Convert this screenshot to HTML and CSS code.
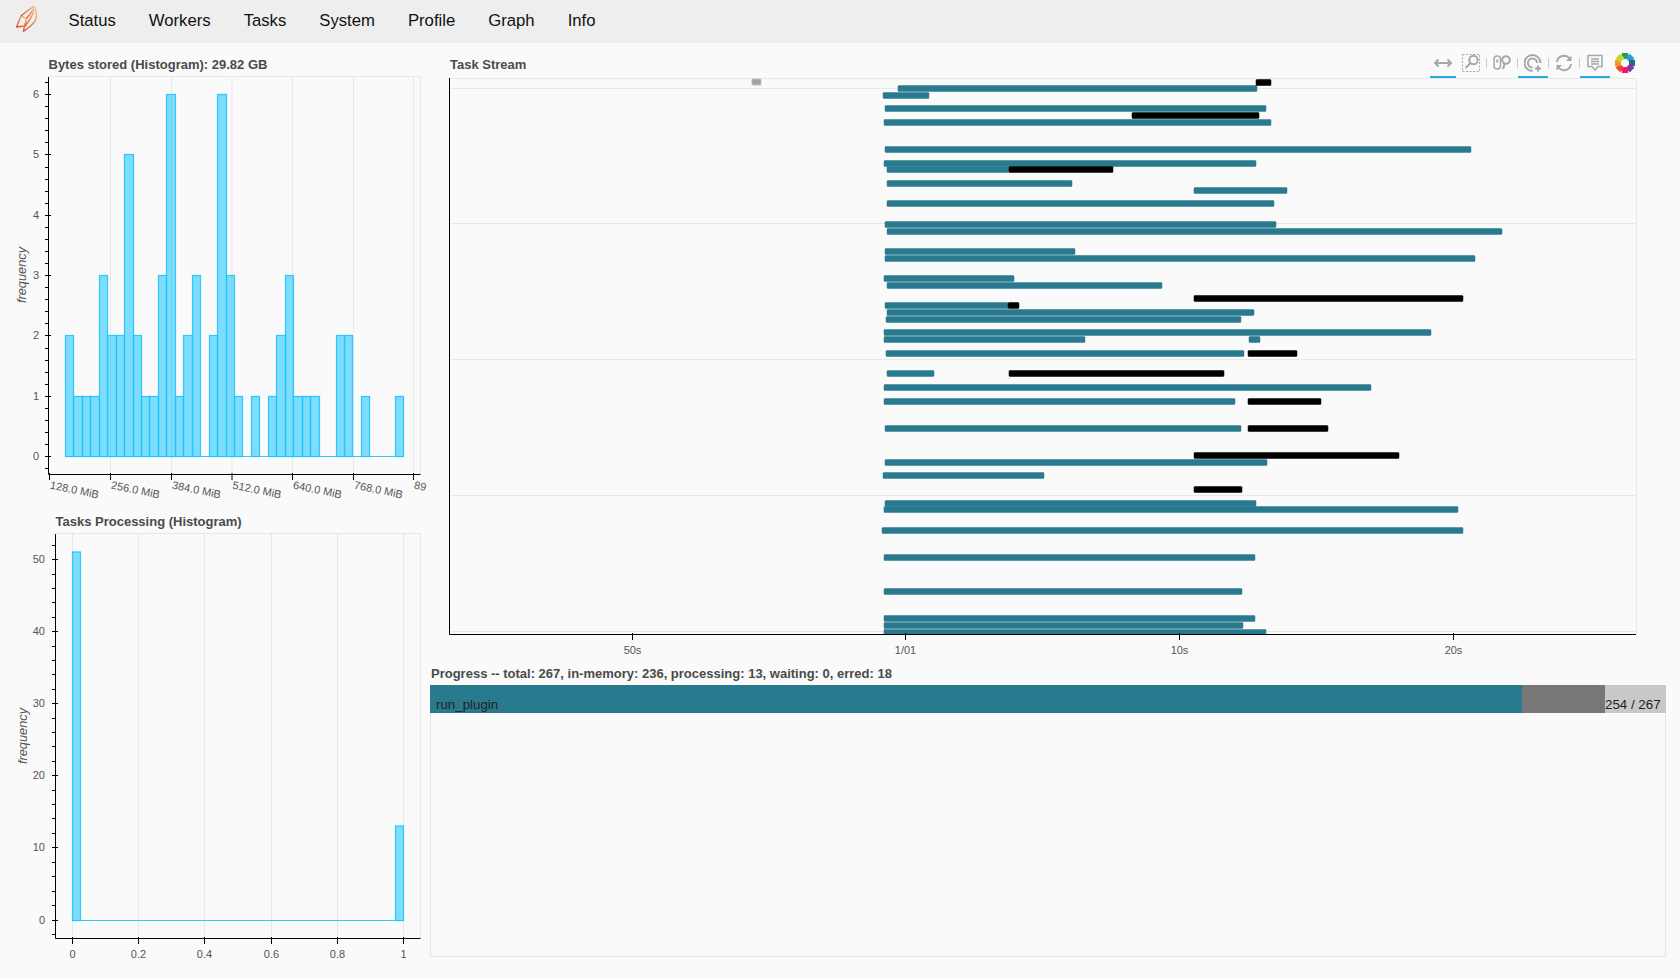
FILE: index.html
```html
<!DOCTYPE html>
<html>
<head>
    <title>Dask Status</title>
    <link rel="stylesheet" href="styles.css">
</head>
<body>
    <nav class="navbar">
        <svg class="navbar-logo" viewBox="0 0 24 28" width="24" height="28">
            <defs>
                <linearGradient id="leaf" x1="0" y1="1" x2="1" y2="0">
                    <stop offset="0" stop-color="#d9502e"/>
                    <stop offset="0.6" stop-color="#e98a5a"/>
                    <stop offset="1" stop-color="#f6c18e"/>
                </linearGradient>
            </defs>
            <g fill="none" stroke="url(#leaf)" stroke-width="1.3" stroke-linejoin="round">
                <path d="M2.500 23 L7 12 L12.500 14.500 L11 22 Z"/>
                <path d="M9.300 27.500 L12.500 14.500"/>
                <path d="M7 12 C11 8.500 15 6 20 2"/>
                <path d="M12.500 14.500 C15 11 18 8 20 4"/>
                <path d="M11 22 C14 18 18 14 20 6"/>
                <path d="M20 2 C23 8 23 14 20.500 18 C17 22.500 13 24.500 9.300 27.500"/>
            </g>
        </svg>
        <ul class="navbar-links">
            <li>Status</li>
            <li>Workers</li>
            <li>Tasks</li>
            <li>System</li>
            <li>Profile</li>
            <li>Graph</li>
            <li>Info</li>
        </ul>
    </nav>

    <main class="dashboard">
        <section class="left-col">
            <h2 class="plot-title title-bytes">Bytes stored (Histogram): 29.82 GB</h2>
            <!-- y range of the viewBox follows the page so the numbers read as screen rows -->
            <svg class="plot" viewBox="0 72 430 433" width="430" height="433">
                <path class="frame" d="M49 76.500 H420.500 V474"/>
                <path class="grid" d="M110.500 77 V474 M171.500 77 V474 M232 77 V474 M292.500 77 V474 M353.500 77 V474 M413.500 77 V474"/>
                <g class="bars">
                    <path d="M65.500 456.500 H403.500"/>
                    <rect x="65.500" y="335.500" width="8" height="121"/>
                    <rect x="73.500" y="396.500" width="9" height="60"/>
                    <rect x="82.500" y="396.500" width="8" height="60"/>
                    <rect x="90.500" y="396.500" width="9" height="60"/>
                    <rect x="99.500" y="275.500" width="8" height="181"/>
                    <rect x="107.500" y="335.500" width="9" height="121"/>
                    <rect x="116.500" y="335.500" width="8" height="121"/>
                    <rect x="124.500" y="154.500" width="9" height="302"/>
                    <rect x="133.500" y="335.500" width="8" height="121"/>
                    <rect x="141.500" y="396.500" width="8" height="60"/>
                    <rect x="149.500" y="396.500" width="9" height="60"/>
                    <rect x="158.500" y="275.500" width="8" height="181"/>
                    <rect x="166.500" y="94.500" width="9" height="362"/>
                    <rect x="175.500" y="396.500" width="8" height="60"/>
                    <rect x="183.500" y="335.500" width="9" height="121"/>
                    <rect x="192.500" y="275.500" width="8" height="181"/>
                    <rect x="209.500" y="335.500" width="8" height="121"/>
                    <rect x="217.500" y="94.500" width="9" height="362"/>
                    <rect x="226.500" y="275.500" width="8" height="181"/>
                    <rect x="234.500" y="396.500" width="8" height="60"/>
                    <rect x="251.500" y="396.500" width="8" height="60"/>
                    <rect x="268.500" y="396.500" width="8" height="60"/>
                    <rect x="276.500" y="335.500" width="9" height="121"/>
                    <rect x="285.500" y="275.500" width="8" height="181"/>
                    <rect x="293.500" y="396.500" width="9" height="60"/>
                    <rect x="302.500" y="396.500" width="8" height="60"/>
                    <rect x="310.500" y="396.500" width="9" height="60"/>
                    <rect x="336.500" y="335.500" width="8" height="121"/>
                    <rect x="344.500" y="335.500" width="8" height="121"/>
                    <rect x="361.500" y="396.500" width="8" height="60"/>
                    <rect x="395.500" y="396.500" width="8" height="60"/>
                </g>
                <path class="axis" d="M48.500 77 V474.500 H420.500"/>
                <path class="axis" d="M45 94.500 H51 M45 154.500 H51 M45 215.500 H51 M45 275.500 H51 M45 335.500 H51 M45 396.500 H51 M45 456.500 H51"/>
                <path class="axis" d="M45 82.500 H48 M45 106.500 H48 M45 118.500 H48 M45 130.500 H48 M45 142.500 H48 M45 167.500 H48 M45 179.500 H48 M45 191.500 H48 M45 203.500 H48 M45 227.500 H48 M45 239.500 H48 M45 251.500 H48 M45 263.500 H48 M45 287.500 H48 M45 299.500 H48 M45 311.500 H48 M45 323.500 H48 M45 348.500 H48 M45 360.500 H48 M45 372.500 H48 M45 384.500 H48 M45 408.500 H48 M45 420.500 H48 M45 432.500 H48 M45 444.500 H48 M45 468.500 H48"/>
                <path class="axis" d="M49.500 473 V480 M110.500 473 V480 M171.500 473 V480 M232 473 V480 M292.500 473 V480 M353.500 473 V480 M413.500 473 V480"/>
                <g class="tick-label end">
                    <text x="39" y="98">6</text>
                    <text x="39" y="158">5</text>
                    <text x="39" y="219">4</text>
                    <text x="39" y="279">3</text>
                    <text x="39" y="339">2</text>
                    <text x="39" y="400">1</text>
                    <text x="39" y="460">0</text>
                </g>
                <g class="tick-label">
                    <text transform="translate(49.500 488.500) rotate(11.500)">128.0 MiB</text>
                    <text transform="translate(110.500 488.500) rotate(11.500)">256.0 MiB</text>
                    <text transform="translate(171.500 488.500) rotate(11.500)">384.0 MiB</text>
                    <text transform="translate(232 488.500) rotate(11.500)">512.0 MiB</text>
                    <text transform="translate(292.500 488.500) rotate(11.500)">640.0 MiB</text>
                    <text transform="translate(353.500 488.500) rotate(11.500)">768.0 MiB</text>
                    <text transform="translate(413.500 488.500) rotate(11.500)">89</text>
                </g>
                <text class="axis-label" transform="translate(25.500 275) rotate(-90)">frequency</text>
            </svg>

            <h2 class="plot-title title-tasks">Tasks Processing (Histogram)</h2>
            <svg class="plot" viewBox="0 530 430 430" width="430" height="430">
                <path class="frame" d="M56 533.500 H420.500 V938"/>
                <path class="grid" d="M72.500 534 V938 M138.500 534 V938 M204.500 534 V938 M271.500 534 V938 M337.500 534 V938 M403.500 534 V938"/>
                <g class="bars">
                    <path d="M72.500 920.500 H403.500"/>
                    <rect x="72.500" y="552" width="8" height="368.500"/>
                    <rect x="395.500" y="826" width="8" height="94.500"/>
                </g>
                <path class="axis" d="M55.500 534 V938.500 H420.500"/>
                <path class="axis" d="M52 559.500 H58 M52 631.500 H58 M52 703.500 H58 M52 775.500 H58 M52 847.500 H58 M52 920.500 H58"/>
                <path class="axis" d="M52 545.500 H55 M52 574.500 H55 M52 588.500 H55 M52 602.500 H55 M52 617.500 H55 M52 646.500 H55 M52 660.500 H55 M52 674.500 H55 M52 689.500 H55 M52 718.500 H55 M52 732.500 H55 M52 746.500 H55 M52 761.500 H55 M52 790.500 H55 M52 804.500 H55 M52 818.500 H55 M52 833.500 H55 M52 862.500 H55 M52 876.500 H55 M52 891.500 H55 M52 905.500 H55 M52 934.500 H55"/>
                <path class="axis" d="M72.500 937 V944 M138.500 937 V944 M204.500 937 V944 M271.500 937 V944 M337.500 937 V944 M403.500 937 V944"/>
                <g class="tick-label end">
                    <text x="45" y="563">50</text>
                    <text x="45" y="635">40</text>
                    <text x="45" y="707">30</text>
                    <text x="45" y="779">20</text>
                    <text x="45" y="851">10</text>
                    <text x="45" y="924">0</text>
                </g>
                <g class="tick-label middle">
                    <text x="72.500" y="958">0</text>
                    <text x="138.500" y="958">0.2</text>
                    <text x="204.500" y="958">0.4</text>
                    <text x="271.500" y="958">0.6</text>
                    <text x="337.500" y="958">0.8</text>
                    <text x="403.500" y="958">1</text>
                </g>
                <text class="axis-label" transform="translate(26.500 736) rotate(-90)">frequency</text>
            </svg>
        </section>

        <section class="right-col">
            <header class="stream-header">
                <h2 class="plot-title title-stream">Task Stream</h2>
                <div class="toolbar">
                    <div class="tool tool-pan active">
                        <svg viewBox="0 0 18 18" width="18" height="18"><path class="ico" d="M1 9 H17 M4.500 5.500 L1 9 L4.500 12.500 M13.500 5.500 L17 9 L13.500 12.500"/></svg>
                    </div>
                    <div class="tool">
                        <svg viewBox="0 0 18 18" width="18" height="18">
                            <rect class="ico-dash" x="0.500" y="0.500" width="17" height="17"/>
                            <circle class="ico" cx="11.500" cy="6" r="4.200"/>
                            <path class="ico" d="M8.500 9 L3.500 14"/>
                        </svg>
                    </div>
                    <span class="tool-sep"></span>
                    <div class="tool">
                        <svg viewBox="0 0 18 18" width="18" height="18">
                            <rect class="ico-thin" x="1" y="2" width="6.500" height="13" rx="3.200"/>
                            <path class="ico" d="M4.200 5.500 V8.500"/>
                            <circle class="ico" cx="13" cy="6" r="3.800"/>
                            <path class="ico" d="M11.800 9.500 L10 15"/>
                        </svg>
                    </div>
                    <span class="tool-sep"></span>
                    <div class="tool active">
                        <svg viewBox="0 0 18 18" width="18" height="18">
                            <path class="ico" d="M8.500 17 A8 8 0 1 1 16.500 9"/>
                            <path class="ico" d="M8.500 13.500 A4.500 4.500 0 1 1 13 9"/>
                            <path class="ico" d="M14 11.500 V17.500 M11 14.500 H17"/>
                        </svg>
                    </div>
                    <span class="tool-sep"></span>
                    <div class="tool">
                        <svg viewBox="0 0 18 18" width="18" height="18">
                            <path class="ico" d="M2 8 A7 7 0 0 1 14.500 4.500 M16 10 A7 7 0 0 1 3.500 13.500"/>
                            <path class="ico-fill" d="M16.500 1.500 V7 H11 Z M1.500 16.500 V11 H7 Z"/>
                        </svg>
                    </div>
                    <span class="tool-sep"></span>
                    <div class="tool active">
                        <svg viewBox="0 0 18 18" width="18" height="18">
                            <path class="ico-thin" d="M2 1.500 H16 V12.500 H12 L9 16 L6 12.500 H2 Z"/>
                            <path class="ico-thin" d="M5 5 H13 M5 7.500 H13 M5 10 H13"/>
                        </svg>
                    </div>
                    <!-- eight blocks turned around the centre -->
                    <svg class="bokeh-logo" viewBox="-10 -10 20 20" width="20" height="20">
                        <rect x="-3.200" y="-10" width="6.400" height="6" fill="#1f9d63"/>
                        <rect x="-3.200" y="-10" width="6.400" height="6" fill="#2a9fd6" transform="rotate(45)"/>
                        <rect x="-3.200" y="-10" width="6.400" height="6" fill="#1d6f8f" transform="rotate(90)"/>
                        <rect x="-3.200" y="-10" width="6.400" height="6" fill="#7c3a9e" transform="rotate(135)"/>
                        <rect x="-3.200" y="-10" width="6.400" height="6" fill="#e5197d" transform="rotate(180)"/>
                        <rect x="-3.200" y="-10" width="6.400" height="6" fill="#ef4136" transform="rotate(225)"/>
                        <rect x="-3.200" y="-10" width="6.400" height="6" fill="#f7931e" transform="rotate(270)"/>
                        <rect x="-3.200" y="-10" width="6.400" height="6" fill="#c8d62b" transform="rotate(315)"/>
                    </svg>
                </div>
            </header>

            <svg class="plot" viewBox="430 78 1210 580" width="1210" height="580">
                <path class="frame" d="M450 78.500 H1636.500 V634"/>
                <path class="grid" d="M450 88.500 H1636 M450 223.500 H1636 M450 359.500 H1636 M450 495.500 H1636 M450 631.500 H1636"/>
                <rect class="marker" x="752" y="79" width="9" height="6" rx="1"/>

                <g class="task teal">
                    <rect x="898" y="85" width="359" height="6"/>
                    <rect x="883" y="92" width="46" height="6"/>
                    <rect x="885" y="105" width="381" height="6"/>
                    <rect x="884" y="119" width="387" height="6"/>
                    <rect x="885" y="146" width="586" height="6"/>
                    <rect x="884" y="160" width="372" height="6"/>
                    <rect x="887" y="166" width="122" height="6"/>
                    <rect x="887" y="180" width="185" height="6"/>
                    <rect x="1194" y="187" width="93" height="6"/>
                    <rect x="887" y="200" width="387" height="6"/>
                    <rect x="885" y="221" width="391" height="6"/>
                    <rect x="887" y="228" width="615" height="6"/>
                    <rect x="885" y="248" width="190" height="6"/>
                    <rect x="885" y="255" width="590" height="6"/>
                    <rect x="884" y="275" width="130" height="6"/>
                    <rect x="887" y="282" width="275" height="6"/>
                    <rect x="885" y="302" width="123" height="6"/>
                    <rect x="887" y="309" width="367" height="6"/>
                    <rect x="886" y="316" width="355" height="6"/>
                    <rect x="884" y="329" width="547" height="6"/>
                    <rect x="884" y="336" width="201" height="6"/>
                    <rect x="1249" y="336" width="11" height="6"/>
                    <rect x="886" y="350" width="358" height="6"/>
                    <rect x="887" y="370" width="47" height="6"/>
                    <rect x="884" y="384" width="487" height="6"/>
                    <rect x="884" y="398" width="351" height="6"/>
                    <rect x="885" y="425" width="356" height="6"/>
                    <rect x="885" y="459" width="382" height="6"/>
                    <rect x="883" y="472" width="161" height="6"/>
                    <rect x="885" y="500" width="371" height="6"/>
                    <rect x="884" y="506" width="574" height="6"/>
                    <rect x="882" y="527" width="581" height="6"/>
                    <rect x="884" y="554" width="371" height="6"/>
                    <rect x="884" y="588" width="358" height="6"/>
                    <rect x="884" y="615" width="371" height="6"/>
                    <rect x="884" y="622" width="359" height="6"/>
                    <path d="M884 634 V629 H1266 V634"/>
                </g>
                <g class="task black">
                    <rect x="1256" y="79" width="15" height="6"/>
                    <rect x="1132" y="112" width="127" height="6"/>
                    <rect x="1009" y="166" width="104" height="6"/>
                    <rect x="1194" y="295" width="269" height="6"/>
                    <rect x="1008" y="302" width="11" height="6"/>
                    <rect x="1248" y="350" width="49" height="6"/>
                    <rect x="1009" y="370" width="215" height="6"/>
                    <rect x="1248" y="398" width="73" height="6"/>
                    <rect x="1248" y="425" width="80" height="6"/>
                    <rect x="1194" y="452" width="205" height="6"/>
                    <rect x="1194" y="486" width="48" height="6"/>
                </g>

                <path class="axis" d="M449.500 78 V634.500 H1636"/>
                <path class="axis" d="M632.500 633 V640 M905.500 633 V640 M1179.500 633 V640 M1453.500 633 V640"/>
                <g class="tick-label middle">
                    <text x="632.500" y="654">50s</text>
                    <text x="905.500" y="654">1/01</text>
                    <text x="1179.500" y="654">10s</text>
                    <text x="1453.500" y="654">20s</text>
                </g>
            </svg>

            <h2 class="plot-title title-progress">Progress -- total: 267, in-memory: 236, processing: 13, waiting: 0, erred: 18</h2>
            <div class="progress">
                <div class="progress-bar">
                    <div class="seg seg-memory">run_plugin</div>
                    <div class="seg seg-processing"></div>
                    <div class="seg seg-rest">254 / 267</div>
                </div>
            </div>
        </section>
    </main>
</body>
</html>
```

FILE: styles.css
```css
* {
    margin: 0;
    padding: 0;
    box-sizing: border-box;
}

body {
    background-color: #fafafa;
    color: #444;
    font-family: 'Liberation Sans', Arial, sans-serif;
    overflow: hidden;
}

.navbar {
    display: flex;
    align-items: center;
    height: 43px;
    background-color: #eeeeee;
}

.navbar-logo {
    margin: 0 0 7px 14px;
}

.navbar-links {
    display: flex;
    list-style: none;
    margin: 0 0 2px 30.500px;
    gap: 33px;
    font-size: 16.700px;
    color: #111;
}

.dashboard {
    display: flex;
}

.left-col {
    width: 430px;
    flex: none;
}

.right-col {
    width: 1236px;
    flex: none;
}

.plot {
    display: block;
    overflow: hidden;
}

.plot-title {
    font-size: 13px;
    font-weight: bold;
    line-height: 16px;
    color: #4a4a4a;
}

.title-bytes {
    margin: 14px 0 -1px 48.500px;
}

.title-tasks {
    margin: 9px 0 0 55.500px;
}

.title-stream {
    margin: 14px 0 0 20px;
}

.title-progress {
    margin: 8px 0 -1px 1px;
}

/* shared plot strokes */
.frame {
    fill: none;
    stroke: #e8e8e8;
}

.grid {
    fill: none;
    stroke: #e8e8e8;
}

.axis {
    fill: none;
    stroke: #000;
}

.bars rect, .bars path {
    fill: #00bfff;
    fill-opacity: 0.5;
    stroke: #1dc4ff;
    stroke-opacity: 0.9;
    stroke-width: 1.200;
}

.tick-label text {
    font-size: 11px;
    fill: #555;
}

.tick-label.end text {
    text-anchor: end;
}

.tick-label.middle text {
    text-anchor: middle;
}

.axis-label {
    font-size: 12.800px;
    font-style: italic;
    fill: #555;
    text-anchor: middle;
}

/* task stream rectangles */
.task {
    transform: translate(0, 0.5px);
}

.task rect, .task path {
    stroke-width: 1;
    stroke-opacity: 0.5;
}

.task rect {
    rx: 1px;
}

.teal rect, .teal path {
    fill: #297a8f;
    stroke: #297a8f;
}

.black rect {
    fill: #000;
    stroke: #000;
}

.marker {
    fill: #a3a3a3;
    stroke: #bbb;
}

/* toolbar above the stream */
.stream-header {
    display: flex;
    justify-content: space-between;
    height: 35px;
}

.toolbar {
    display: flex;
    align-items: flex-start;
    align-self: flex-end;
    margin-right: 31px;
}

.tool {
    display: flex;
    align-items: center;
    justify-content: center;
    width: 30px;
    height: 24px;
    padding-bottom: 4px;
    border-bottom: 2px solid transparent;
}

.tool-pan {
    width: 26px;
}

.tool.active {
    border-bottom-color: #26aae1;
}

.tool-sep {
    width: 1px;
    height: 10px;
    margin-top: 4px;
    background-color: #ccc;
}

.ico {
    fill: none;
    stroke: #a3a8ab;
    stroke-width: 2;
}

.ico-thin {
    fill: none;
    stroke: #a3a8ab;
    stroke-width: 1.500;
}

.ico-dash {
    fill: none;
    stroke: #a3a8ab;
    stroke-dasharray: 2 1.500;
}

.ico-fill {
    fill: #a3a8ab;
}

.bokeh-logo {
    margin: -1px 0 0 5px;
}

/* progress panel */
.progress {
    height: 272px;
    margin-top: 4px;
    border: 1px solid #e5e5e5;
    border-top: none;
}

.progress-bar {
    display: flex;
    height: 28px;
    margin: 0 -1px;
    color: #222;
    font-size: 13.330px;
    line-height: 16px;
}

.seg {
    display: flex;
    align-items: flex-end;
}

.seg-memory {
    width: 1092px;
    padding-left: 6px;
    background-color: #297a8f;
}

.seg-processing {
    width: 83px;
    background-color: #777;
}

.seg-rest {
    flex: 1;
    background-color: #c8c8c8;
}
```
